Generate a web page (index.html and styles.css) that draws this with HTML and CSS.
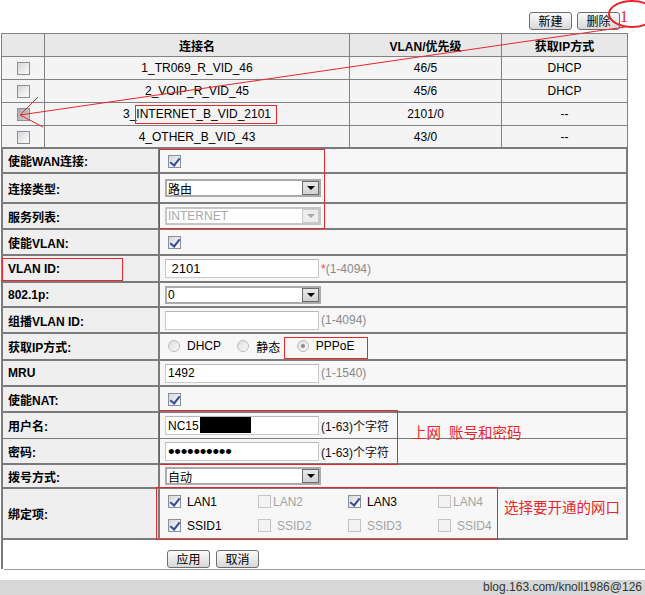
FILE: index.html
```html
<!DOCTYPE html>
<html lang="zh-CN">
<head>
    <meta charset="UTF-8">
    <title>WAN连接配置</title>
    <link rel="stylesheet" href="styles.css">
</head>
<body>
<div class="page">
    <div class="toolbar">
        <button class="btn">新建</button>
        <button class="btn">删除</button>
    </div>

    <table class="wan-list">
        <colgroup>
            <col style="width:43px"><col style="width:305px"><col style="width:152px"><col style="width:126px">
        </colgroup>
        <tr>
            <th></th><th>连接名</th><th>VLAN/优先级</th><th>获取IP方式</th>
        </tr>
        <tr>
            <td><span class="cb"></span></td><td>1_TR069_R_VID_46</td><td>46/5</td><td>DHCP</td>
        </tr>
        <tr>
            <td><span class="cb"></span></td><td>2_VOIP_R_VID_45</td><td>45/6</td><td>DHCP</td>
        </tr>
        <tr>
            <td><span class="cb dim"></span></td><td>3_INTERNET_B_VID_2101</td><td>2101/0</td><td>--</td>
        </tr>
        <tr class="last">
            <td><span class="cb"></span></td><td>4_OTHER_B_VID_43</td><td>43/0</td><td>--</td>
        </tr>
    </table>

    <table class="wan-form">
        <colgroup>
            <col style="width:157px"><col>
        </colgroup>
        <tr class="h25">
            <td class="lbl">使能WAN连接:</td>
            <td class="val"><span class="cb on"></span></td>
        </tr>
        <tr class="h30">
            <td class="lbl">连接类型:</td>
            <td class="val"><span class="sel"><span class="txt">路由</span><span class="arrow"></span></span></td>
        </tr>
        <tr>
            <td class="lbl">服务列表:</td>
            <td class="val"><span class="sel off"><span class="txt">INTERNET</span><span class="arrow"></span></span></td>
        </tr>
        <tr>
            <td class="lbl">使能VLAN:</td>
            <td class="val"><span class="cb on"></span></td>
        </tr>
        <tr class="h27">
            <td class="lbl">VLAN ID:</td>
            <td class="val"><span class="inp wide-text">&nbsp;2101</span><span class="hint"><em>*</em>(1-4094)</span></td>
        </tr>
        <tr class="h25">
            <td class="lbl">802.1p:</td>
            <td class="val"><span class="sel"><span class="txt">0</span><span class="arrow"></span></span></td>
        </tr>
        <tr>
            <td class="lbl">组播VLAN ID:</td>
            <td class="val"><span class="inp"></span><span class="hint">(1-4094)</span></td>
        </tr>
        <tr class="h27">
            <td class="lbl">获取IP方式:</td>
            <td class="val">
                <label class="opt"><span class="rd"></span>DHCP</label>
                <label class="opt"><span class="rd"></span>静态</label>
                <label class="opt"><span class="rd on"></span>PPPoE</label>
            </td>
        </tr>
        <tr>
            <td class="lbl">MRU</td>
            <td class="val"><span class="inp">1492</span><span class="hint">(1-1540)</span></td>
        </tr>
        <tr>
            <td class="lbl">使能NAT:</td>
            <td class="val"><span class="cb on"></span></td>
        </tr>
        <tr class="thin">
            <td class="lbl">用户名:</td>
            <td class="val"><span class="inp">NC15<span class="blackout"></span></span><span class="hint dark">(1-63)个字符</span></td>
        </tr>
        <tr>
            <td class="lbl">密码:</td>
            <td class="val"><span class="inp"><span class="dots">••••••••••</span></span><span class="hint dark">(1-63)个字符</span></td>
        </tr>
        <tr class="h24">
            <td class="lbl">拨号方式:</td>
            <td class="val"><span class="sel"><span class="txt">自动</span><span class="arrow"></span></span></td>
        </tr>
        <tr class="h50">
            <td class="lbl">绑定项:</td>
            <td class="val">
                <div class="ports">
                    <label class="port"><span class="cb on"></span>LAN1</label>
                    <label class="port off tight"><span class="cb"></span>LAN2</label>
                    <label class="port"><span class="cb on"></span>LAN3</label>
                    <label class="port off tight"><span class="cb"></span>LAN4</label>
                    <label class="port"><span class="cb on"></span>SSID1</label>
                    <label class="port off"><span class="cb"></span>SSID2</label>
                    <label class="port off"><span class="cb"></span>SSID3</label>
                    <label class="port off"><span class="cb"></span>SSID4</label>
                </div>
            </td>
        </tr>
    </table>

    <div class="actions">
        <button class="btn">应用</button>
        <button class="btn">取消</button>
    </div>
    <div class="rule"></div>
    <div class="footer">blog.163.com/knoll1986@126</div>

    <!-- red annotations drawn over the screenshot -->
    <svg class="marks" width="645" height="595" viewBox="0 0 645 595">
        <g class="mark-lines">
            <path d="M625 27 L20 115 M20 115 L38 97 M20 115 L43 127"/>
            <rect x="135.5" y="105.5" width="141" height="18"/>
            <rect x="159.5" y="149.5" width="165" height="79"/>
            <rect x="2.5" y="258.5" width="120" height="22"/>
            <rect x="284.5" y="337.5" width="83" height="21"/>
            <rect x="159.5" y="410.5" width="238" height="54"/>
            <rect x="156.5" y="487.5" width="341" height="52"/>
            <ellipse class="ring" cx="632" cy="14" rx="23" ry="13"/>
        </g>
        <text class="mark-num" x="620" y="22">1</text>
        <text class="mark-text" x="412" y="438">上网</text>
        <text class="mark-text" x="449" y="438">账号和密码</text>
        <text class="mark-text" x="504" y="513">选择要开通的网口</text>
    </svg>
</div>
</body>
</html>
```

FILE: styles.css
```css
* {
    box-sizing: border-box;
}

body {
    margin: 0;
    background: #fff;
    color: #000;
    font-family: "Liberation Sans", "Noto Sans CJK SC", sans-serif;
    font-size: 12px;
}

.page {
    position: relative;
    width: 645px;
    height: 595px;
    overflow: hidden;
}

/* buttons */
.btn {
    width: 43px;
    height: 18px;
    padding: 0;
    border: 1px solid #6e6e6e;
    border-radius: 3px;
    background: linear-gradient(#fbfbfb, #d8d8d8);
    color: #000;
    font: 12px/16px "Noto Sans CJK SC", sans-serif;
}

.toolbar {
    height: 33px;
    display: flex;
    justify-content: flex-end;
    gap: 5px;
    padding: 12px 25px 0 0;
}

/* connection list */
.wan-list {
    margin-left: 1px;
    width: 627px;
    table-layout: fixed;
    border-collapse: separate;
    border-spacing: 0;
    border-top: 1px solid #828282;
    border-left: 1px solid #828282;
}

.wan-list th,
.wan-list td {
    height: 23px;
    padding: 0;
    text-align: center;
    background: #f4f4f4;
    border-right: 1px solid #828282;
    border-bottom: 1px solid #828282;
}

.wan-list th {
    background: #e8e8e8;
    font-weight: bold;
}

.wan-list tr.last td {
    height: 21px;
    border-bottom: 0;
}

/* fake checkbox */
.cb {
    display: inline-block;
    position: relative;
    width: 13px;
    height: 13px;
    vertical-align: middle;
    border: 1px solid #8a9099;
    background: linear-gradient(135deg, #d4d6d9, #f6f6f6 80%);
}

.cb.dim {
    background: linear-gradient(135deg, #a9abae, #cfd0d2);
}

.cb.on::after {
    content: "";
    position: absolute;
    left: 3px;
    top: 0;
    width: 4px;
    height: 8px;
    border: solid #36489a;
    border-width: 0 2px 2px 0;
    transform: rotate(38deg);
}

/* config form */
.wan-form {
    margin-left: 1px;
    width: 627px;
    table-layout: fixed;
    border-collapse: separate;
    border-spacing: 0;
    border: 2px solid #7b7b7b;
    border-bottom: 0;
}

.wan-form td {
    height: 26px;
    padding: 0 0 0 5px;
    background: #f7f7f7;
    border-bottom: 2px solid #7b7b7b;
}

.wan-form .lbl {
    background: #efefef;
    font-weight: bold;
    border-right: 2px solid #7b7b7b;
}

.wan-form tr.h24 td { height: 24px; }
.wan-form tr.h25 td { height: 25px; }
.wan-form tr.h27 td { height: 27px; }
.wan-form tr.h30 td { height: 30px; }
.wan-form tr.h50 td { height: 51px; }

.wan-form tr.thin td {
    border-bottom-width: 1px;
}

.val .cb {
    margin-left: 3px;
}

.sel {
    display: inline-flex;
    align-items: center;
    width: 156px;
    height: 18px;
    vertical-align: middle;
    border: 2px solid #ababab;
    background: #fff;
}

.sel .txt {
    flex: 1;
    padding-left: 1px;
}

.sel .arrow {
    display: flex;
    align-items: center;
    justify-content: center;
    width: 17px;
    height: 14px;
    border: 1px solid #6c6c6c;
    background: linear-gradient(#e9e9e9, #d2d2d2);
}

.sel .arrow::after {
    content: "";
    border-left: 4px solid transparent;
    border-right: 4px solid transparent;
    border-top: 4px solid #000;
}

.sel.off {
    border-color: #c6c6c6;
    color: #a8a8a8;
}

.sel.off .arrow {
    border-color: #c9c9c9;
    background: #ededed;
}

.sel.off .arrow::after {
    border-top-color: #a9a9a9;
}

.inp {
    display: inline-block;
    width: 154px;
    height: 19px;
    padding-left: 2px;
    vertical-align: middle;
    line-height: 17px;
    border: 1px solid #c9c9c9;
    border-top-color: #b7b7b7;
    background: #fff;
    white-space: nowrap;
    overflow: hidden;
}

.inp.wide-text {
    font-size: 13px;
}

.blackout {
    display: inline-block;
    width: 51px;
    height: 16px;
    margin-left: 1px;
    vertical-align: -3px;
    background: #000;
}

.dots {
    font-size: 19px;
    letter-spacing: -0.3px;
    line-height: 17px;
}

.hint {
    margin-left: 2px;
    color: #8a8a8a;
    vertical-align: middle;
}

.hint em {
    font-style: normal;
    color: #ff3b3b;
}

.hint.dark {
    color: #111;
}

.opt {
    display: inline-flex;
    align-items: center;
    margin-right: 10px;
}

.rd {
    display: inline-block;
    position: relative;
    width: 12px;
    height: 12px;
    margin: 0 7px 0 3px;
    border: 1px solid #bcbcbc;
    border-radius: 50%;
    background: linear-gradient(135deg, #dcdcdc, #fafafa);
}

.rd.on::after {
    content: "";
    position: absolute;
    left: 3px;
    top: 3px;
    width: 4px;
    height: 4px;
    border-radius: 50%;
    background: #8a8a8a;
}

.ports {
    display: grid;
    grid-template-columns: repeat(4, 90px);
    row-gap: 11px;
}

.port {
    display: flex;
    align-items: center;
    height: 13px;
}

.port .cb {
    margin-right: 6px;
}

.port.tight .cb {
    margin-right: 2px;
}

.port.off {
    color: #a3a3a3;
}

.port.off .cb {
    border-color: #c4c4c4;
    background: #f3f3f3;
}

/* bottom */
.actions {
    display: flex;
    gap: 6px;
    height: 29px;
    margin-left: 1px;
    padding: 10px 0 0 164px;
    border-left: 2px solid #7b7b7b;
}

.rule {
    height: 1px;
    margin-left: 4px;
    background: #9d9d9d;
}

.footer {
    margin-top: 10px;
    height: 15px;
    padding-right: 3px;
    background: #d7d7d7;
    color: #333;
    text-align: right;
    line-height: 15px;
}

/* annotations */
.marks {
    position: absolute;
    top: 0;
    left: 0;
    pointer-events: none;
}

.mark-lines {
    fill: none;
    stroke: #e8262b;
    stroke-width: 1;
}

.mark-lines .ring {
    stroke-width: 2;
}

.mark-num {
    fill: #e8262b;
    font: 16px "Liberation Serif", serif;
}

.mark-text {
    fill: #e8262b;
    font: 14.5px "Noto Sans CJK SC", sans-serif;
}
```
